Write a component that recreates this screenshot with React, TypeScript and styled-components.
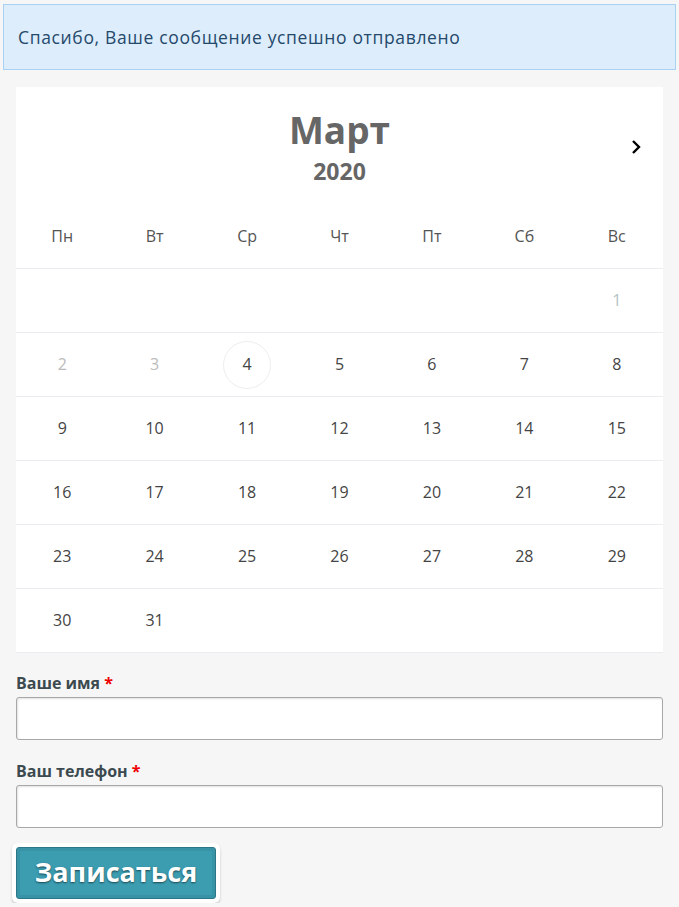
import React from "react";
import styled, { createGlobalStyle } from "styled-components";

const Global = createGlobalStyle`
  html, body { margin: 0; padding: 0; background: #f6f6f6; }
  body { font-family: "Open Sans", "Noto Sans", "DejaVu Sans", sans-serif; }
  * { box-sizing: border-box; }
`;

const Page = styled.div`
  padding: 4px 3px 0 3px;
`;

const Alert = styled.div`
  height: 66px;
  background: #ddedfb;
  border: 1px solid #a9d1f3;
  color: #24496b;
  font-size: 17.5px;
  letter-spacing: 0.65px;
  display: flex;
  align-items: center;
  padding: 0 0 1px 14px;
`;

const Content = styled.div`
  padding: 17px 13px 0 13px;
`;

const Calendar = styled.div`
  background: #fff;
`;

const Header = styled.div`
  position: relative;
  height: 108px;
  display: flex;
  flex-direction: column;
  align-items: center;
  color: #666;
  font-weight: 700;
`;

const Month = styled.div`
  font-size: 37px;
  line-height: 40px;
  margin-top: 23px;
`;

const Year = styled.div`
  font-size: 23px;
  line-height: 26px;
  margin-top: 8px;
`;

const NextBtn = styled.button`
  position: absolute;
  right: 17px;
  top: 50px;
  width: 20px;
  height: 20px;
  padding: 0;
  border: 0;
  background: none;
  display: flex;
  align-items: center;
  justify-content: center;
`;

const Grid = styled.div`
  display: grid;
  grid-template-columns: repeat(7, 1fr);
`;

const WeekDay = styled.div`
  height: 74px;
  display: flex;
  align-items: center;
  justify-content: center;
  font-size: 16px;
  color: #555;
  padding-top: 8px;
  border-bottom: 1px solid #ececf0;
`;

const Cell = styled.div`
  height: 64px;
  display: flex;
  align-items: center;
  justify-content: center;
  border-bottom: 1px solid #ececf0;
`;

const Day = styled.span<{ $muted?: "past" | "other"; $today?: boolean }>`
  width: 48px;
  height: 48px;
  border-radius: 50%;
  display: flex;
  align-items: center;
  justify-content: center;
  font-size: 16px;
  font-weight: 500;
  padding-bottom: 1px;
  color: ${p => (p.$muted === "past" ? "#bbb" : p.$muted === "other" ? "#b3c3c3" : "#444")};
  border: 1px solid ${p => (p.$today ? "#eeeeee" : "transparent")};
`;

const Form = styled.form`
  display: flex;
  flex-direction: column;
  padding-top: 20px;
`;

const Field = styled.div`
  display: flex;
  flex-direction: column;
  gap: 4px;
  margin-bottom: 21px;
`;

const Label = styled.label`
  font-size: 16px;
  font-weight: 700;
  color: #3c4a50;
  line-height: 20px;
`;

const Req = styled.span`
  color: #e00;
`;

const Input = styled.input`
  height: 43px;
  width: 100%;
  border: 1px solid #a8a8a8;
  border-radius: 3px;
  background: #fff;
  box-shadow: inset 1px 1px 2px rgba(0, 0, 0, 0.12);
  font: inherit;
`;

const ButtonRing = styled.div`
  align-self: flex-start;
  margin-left: -4px;
  margin-top: -6px;
  padding: 4px;
  background: #fff;
  border-radius: 6px;
  box-shadow: 0 2px 3px rgba(0, 0, 0, 0.18);
`;

const Submit = styled.button`
  width: 200px;
  height: 52px;
  border: 1px solid #2b7787;
  border-radius: 3px;
  background: #3c9db1;
  box-shadow: inset 0 0 0 3px #3993a7;
  color: #fff;
  font-family: inherit;
  font-weight: 700;
  font-size: 27px;
  text-shadow: 0 1px 2px rgba(0, 0, 0, 0.55);
  padding: 0 0 4px 0;
`;

type D = { n: number | null; muted?: "past" | "other"; today?: boolean };

const days: D[] = [
  ...Array.from({ length: 6 }, () => ({ n: null })),
  { n: 1, muted: "other" },
  { n: 2, muted: "past" },
  { n: 3, muted: "past" },
  { n: 4, today: true },
  ...Array.from({ length: 27 }, (_, i) => ({ n: i + 5 })),
];
while (days.length % 7) days.push({ n: null });

const weekDays = ["Пн", "Вт", "Ср", "Чт", "Пт", "Сб", "Вс"];

export default function App() {
  return (
    <>
      <Global />
      <Page>
        <Alert>Спасибо, Ваше сообщение успешно отправлено</Alert>
        <Content>
          <Calendar>
            <Header>
              <Month>Март</Month>
              <Year>2020</Year>
              <NextBtn aria-label="next">
                <svg width="12" height="16" viewBox="0 0 12 16">
                  <path d="M3 2 L9 8 L3 14" fill="none" stroke="#000" strokeWidth="2.4" />
                </svg>
              </NextBtn>
            </Header>
            <Grid>
              {weekDays.map(w => (
                <WeekDay key={w}>{w}</WeekDay>
              ))}
              {days.map((d, i) => (
                <Cell key={i}>
                  {d.n !== null && (
                    <Day $muted={d.muted} $today={d.today}>
                      {d.n}
                    </Day>
                  )}
                </Cell>
              ))}
            </Grid>
          </Calendar>
          <Form onSubmit={e => e.preventDefault()}>
            <Field>
              <Label>
                Ваше имя <Req>*</Req>
              </Label>
              <Input type="text" />
            </Field>
            <Field>
              <Label>
                Ваш телефон <Req>*</Req>
              </Label>
              <Input type="tel" />
            </Field>
            <ButtonRing>
              <Submit type="submit">Записаться</Submit>
            </ButtonRing>
          </Form>
        </Content>
      </Page>
    </>
  );
}
